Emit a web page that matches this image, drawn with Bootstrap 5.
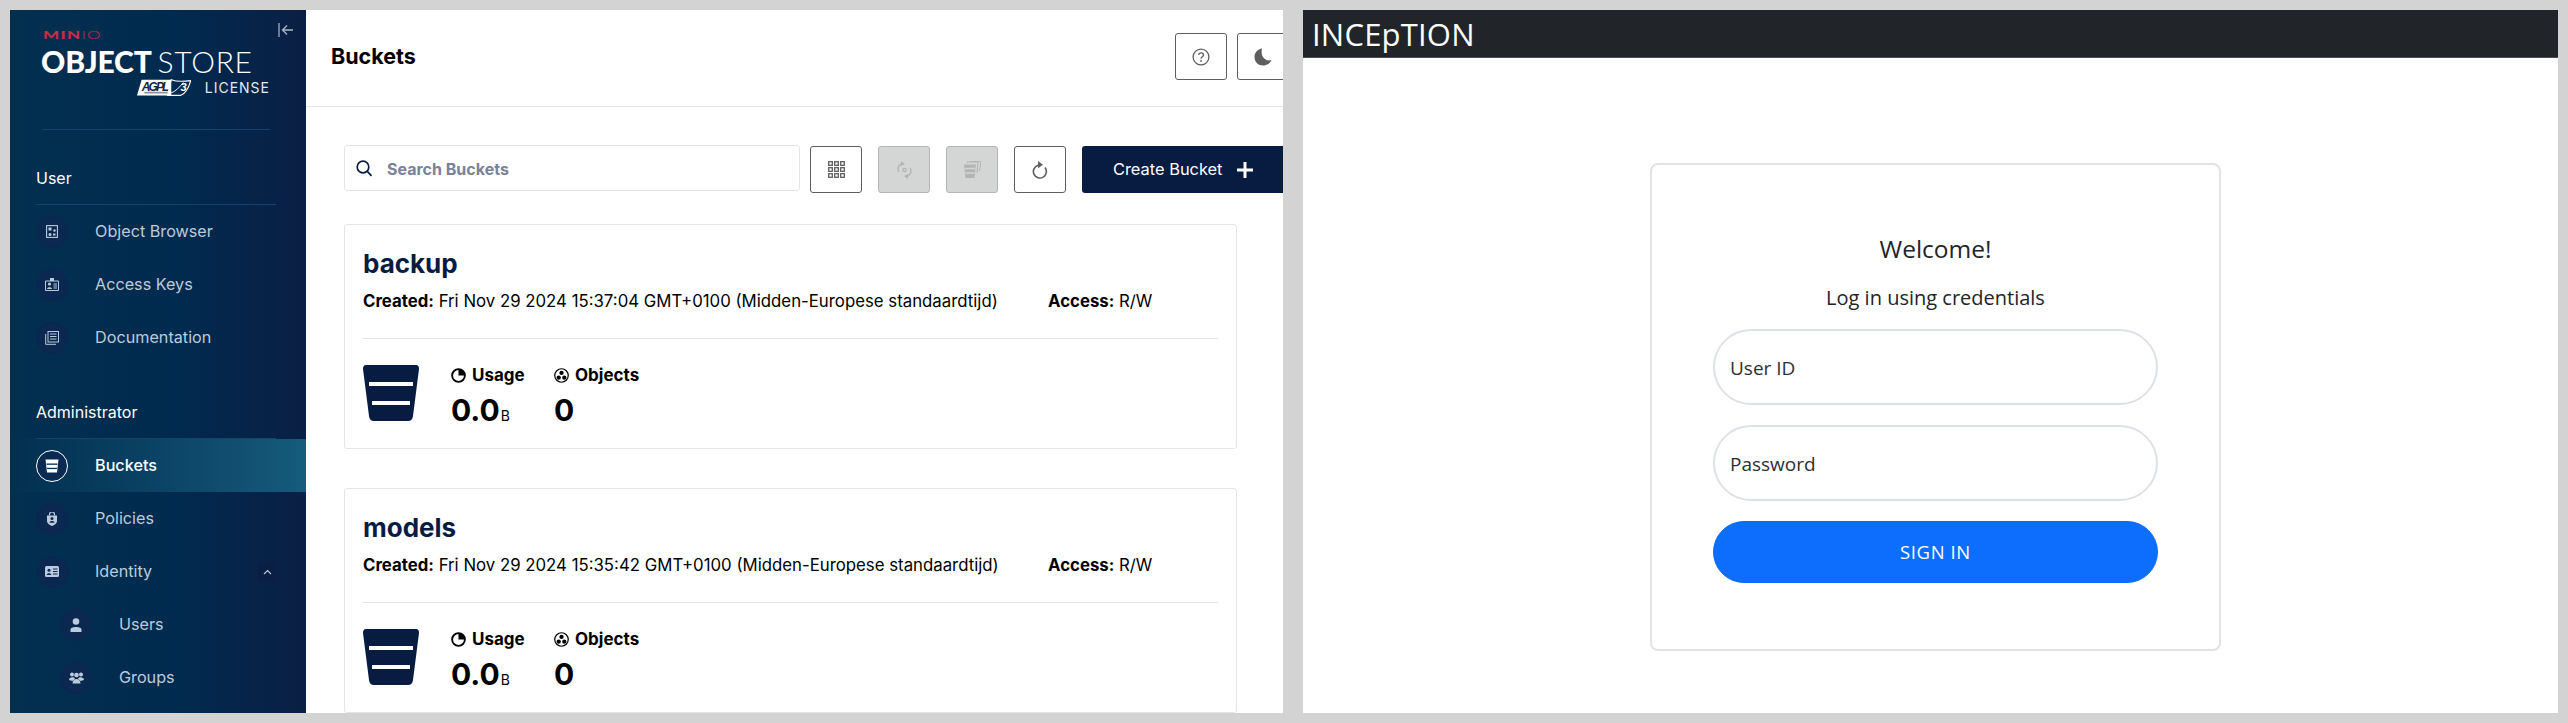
<!DOCTYPE html>
<html lang="en">
<head>
<meta charset="utf-8">
<title>MinIO and INCEpTION</title>
<link href="https://cdn.jsdelivr.net/npm/bootstrap@5.3.0/dist/css/bootstrap.min.css" rel="stylesheet">
<style>
html,body{height:100%;}
body{background:#d3d3d3;overflow:hidden;}
.shell{height:723px;padding:10px;gap:20px;}
.minio-pane{width:1273px;flex:none;background:#fff;overflow:hidden;font-family:Inter,"Liberation Sans",sans-serif;color:#000;}
.side{width:296px;flex:none;background:linear-gradient(90deg,#03304f 0%,#002a4f 55%,#0b1f44 100%);color:#bccbdc;position:relative;}
.collapse-ico{position:absolute;left:268px;top:13px;width:16px;height:14px;}
.brand{margin:22px 36px 0 32px;height:98px;border-bottom:1px solid #15436a;box-sizing:content-box;}
.brand-minio{font-size:12px;line-height:8px;height:8px;color:#c72c48;letter-spacing:.9px;font-weight:900;font-family:Lato,Inter,sans-serif;transform-origin:left;transform:scaleX(1.42);margin-top:-1px;margin-left:1px;}
.brand-minio span{font-weight:300;}
.brand-title{font-size:30px;line-height:22px;margin:11px 0 0 -1px;color:#fff;font-weight:900;letter-spacing:-.2px;white-space:nowrap;font-family:Lato,Inter,sans-serif;}
.brand-title span{font-weight:300;letter-spacing:.7px;}
.brand-sub{margin-top:7px;height:18px;margin-left:95px;}
.brand-lic{color:#e4e9ef;font-size:14px;letter-spacing:1px;line-height:18px;margin-left:14px;}
.side-head{margin:36px 30px 0 26px;padding-bottom:14px;border-bottom:1px solid #15436a;color:#fff;font-size:16px;line-height:24px;}
.side-row{height:53px;padding-left:26px;font-size:16.2px;gap:27px;}
.side-row.sub{padding-left:50px;}
.side-row.on{background:linear-gradient(90deg,rgba(21,92,124,0) 0%,#155c7c 100%);color:#fff;font-weight:500;}
.side-circle{width:32px;height:32px;flex:none;border-radius:50%;background:#0b2851;border:1px solid #0d2650;color:#bccbdc;}
.on .side-circle{background:#0b2a52;border-color:#fff;color:#fff;}
.chev-box{width:18px;height:18px;background:#0b1f44;border-radius:2px;margin-left:auto;margin-right:30px;}
.main-col{width:977px;flex:none;overflow:hidden;}
.top-bar{height:97px;border-bottom:1px solid #e5e5e5;padding:0 0 3px 25px;gap:10px;}
.page-title{width:834px;flex:none;font-size:21.5px;font-weight:700;margin:0;}
.square-btn{width:52px;height:47px;flex:none;padding:0;border:1px solid #5e5e5e;border-radius:3px;background:#fff;color:#5e5e5e;}
.square-btn:hover{background:#fff;color:#5e5e5e;border-color:#5e5e5e;}
.square-btn.off,.square-btn.off:disabled{background:#d4d6d5;border-color:#b5b5b5;color:#b3b5b4;opacity:1;}
.tool-wrap{padding:39px 0 0 38px;}
.tool-row{height:47px;margin-bottom:31px;}
.search-box{width:456px;height:46px;flex:none;margin-top:-1px;border:1px solid #e5e5e5;border-radius:3px;padding:1px 0 0 11px;margin-right:10px;color:#081c42;}
.search-input{border:0;outline:0;padding:0;margin-left:14px;flex:1;min-width:0;font-size:16px;font-weight:700;color:#081c42;background:transparent;}
.search-input::placeholder{color:#7a8299;opacity:1;}
.gap-16{gap:16px;}
.create-btn{width:210px;flex:none;height:47px;margin-left:16px;background:#081c42;border:0;border-radius:3px;color:#fff;font-size:16.4px;padding:0 0 0 31px;gap:15px;justify-content:flex-start;}
.create-btn:hover{background:#081c42;color:#fff;}
.bucket-box{width:893px;height:225px;margin-bottom:39px;border:1px solid #e5e5e5;border-radius:3px;padding:23px 18px 0;flex:none;}
.bucket-name{font-size:26px;line-height:32px;font-weight:700;color:#081c42;margin:0;}
.bucket-meta{margin-top:11px;line-height:20px;font-size:16.8px;padding-bottom:27px;border-bottom:1px solid #e5e5e5;}
.bucket-meta b{font-weight:700;}
.meta-created{width:685px;flex:none;white-space:nowrap;}
.stats{margin-top:26px;}
.stat-col{width:103px;flex:none;}
.stat-label{font-size:17px;font-weight:700;line-height:20px;gap:6px;white-space:nowrap;}
.stat-val{font-size:30px;font-weight:700;line-height:30px;margin-top:10px;}
.stat-val small{font-size:14px;font-weight:400;margin-left:1px;}
.bucket-big{margin-right:32px;flex:none;}
.incept-pane{flex:1;min-width:0;background:#fff;font-family:"Open Sans","Noto Sans",sans-serif;color:#212529;}
.incept-nav{height:48px;padding:0 0 0 9px;border-bottom:1px solid #4a4d50;align-items:center;flex-wrap:nowrap;justify-content:flex-start;}
.incept-nav .navbar-brand{font-size:31px;line-height:40px;padding:0;margin:0;color:#fff;letter-spacing:.2px;}
.login-box{width:571px;height:488px;margin:105px 0 0 347px;border:2px solid #e3e3e3;border-radius:8px;padding:66px 61px 0;}
.login-title{font-size:24.5px;line-height:36px;margin:0;text-align:center;}
.login-sub{font-size:20px;line-height:28px;margin:17px 0 0;text-align:center;}
.login-field{margin-top:17px;}
.login-field+.login-field{margin-top:20px;}
.login-field .form-control{height:76px;min-height:76px;border-radius:38px;border:2px solid #dee2e6;padding:0 16px;}
.login-field label{font-size:19px;line-height:28px;padding:25px 0 0 17px;color:#2b3035;opacity:1;border:0;}
.signin{width:100%;height:62px;margin-top:20px;border-radius:31px;background:#0d6efd;font-size:18.5px;letter-spacing:.6px;text-transform:uppercase;padding-top:5px;}
</style>
</head>
<body>
<svg width="0" height="0" class="d-none">
  <symbol id="i-bucket" viewBox="0 0 56 56"><path d="M3 0H53Q56 0 56 4L50 51Q49.500 56 45 56H11Q6.500 56 6 51L0 4Q0 0 3 0Z" fill="currentColor"/><rect x="6" y="17" width="44" height="4" fill="#fff"/><rect x="9" y="36" width="38" height="4" fill="#fff"/></symbol>
  <symbol id="i-usage" viewBox="0 0 16 16"><circle cx="8" cy="8" r="6.800" fill="none" stroke="currentColor" stroke-width="2"/><path d="M8 8V1.500A6.500 6.500 0 0 1 14.500 8Z" fill="currentColor"/></symbol>
  <symbol id="i-objects" viewBox="0 0 16 16"><circle cx="8" cy="8" r="7.200" fill="none" stroke="currentColor" stroke-width="1.300"/><circle cx="8" cy="5.200" r="2.300" fill="currentColor"/><circle cx="5" cy="10.300" r="2.300" fill="currentColor"/><circle cx="11" cy="10.300" r="2.300" fill="currentColor"/></symbol>
</svg>

<div class="shell d-flex">
  <div class="minio-pane d-flex">
    <aside class="side">
      <svg class="collapse-ico" viewBox="0 0 16 14" aria-hidden="true"><path d="M1 0V14" stroke="#8d9db0" stroke-width="1.500"/><path d="M15 7H5M9 2.500L4.500 7L9 11.500" fill="none" stroke="#aab6c4" stroke-width="1.300"/></svg>
      <div class="brand">
        <div class="brand-minio">MIN<span>IO</span></div>
        <div class="brand-title">OBJECT <span>STORE</span></div>
        <div class="brand-sub d-flex align-items-center">
          <svg width="58" height="18" viewBox="0 0 58 18" aria-hidden="true">
            <path d="M5 0H37V17H0Z" fill="#fff"/>
            <text x="5" y="12" font-family="Liberation Sans" font-style="italic" font-weight="700" font-size="13" fill="#15243f" textLength="30">AGPL</text>
            <rect x="8" y="13" width="26" height="2" fill="#8a93a3"/>
            <path d="M37 0L33 17H47C53 15 56 8 58 1C50 2 42 2 37 0Z" fill="none" stroke="#fff" stroke-width="1.200"/>
            <path d="M35 15C42 13 46 8 50 3" fill="none" stroke="#fff" stroke-width="1"/>
            <text x="47" y="12" font-family="Liberation Sans" font-weight="700" font-style="italic" font-size="12" fill="#fff">3</text>
          </svg>
          <span class="brand-lic">LICENSE</span>
        </div>
      </div>

      <div class="side-head">User</div>
      <div class="side-row d-flex align-items-center"><span class="side-circle d-flex align-items-center justify-content-center"><svg width="12" height="13" viewBox="0 0 12 13"><rect x=".6" y=".6" width="10.800" height="11.800" fill="none" stroke="currentColor" stroke-width="1.100"/><rect x="2.500" y="2.500" width="3" height="3" fill="currentColor"/><circle cx="8.500" cy="5.500" r="1.200" fill="currentColor"/><circle cx="4" cy="9.500" r="1.500" fill="currentColor"/><rect x="7" y="8.500" width="2.500" height="2" fill="currentColor"/></svg></span><span>Object Browser</span></div>
      <div class="side-row d-flex align-items-center"><span class="side-circle d-flex align-items-center justify-content-center"><svg width="14" height="13" viewBox="0 0 14 13"><path d="M1 3H13.500V12.500H.5V3Z" fill="none" stroke="currentColor"/><rect x="5" y="0" width="4" height="3" fill="currentColor"/><circle cx="4.500" cy="6" r="1.600" fill="currentColor"/><path d="M2 11C2 8.500 7 8.500 7 11Z" fill="currentColor"/><path d="M8.500 6H12M8.500 8H12M8.500 10H12" stroke="currentColor"/></svg></span><span>Access Keys</span></div>
      <div class="side-row d-flex align-items-center"><span class="side-circle d-flex align-items-center justify-content-center"><svg width="14" height="14" viewBox="0 0 14 14"><rect x="3" y=".5" width="10.500" height="10.500" fill="none" stroke="currentColor"/><path d="M5 3H11.500M5 5.500H11.500M5 8H11.500" stroke="currentColor"/><path d="M.7 3V13.300H11" fill="none" stroke="currentColor"/></svg></span><span>Documentation</span></div>

      <div class="side-head">Administrator</div>
      <div class="side-row on d-flex align-items-center"><span class="side-circle d-flex align-items-center justify-content-center"><svg width="14" height="14" viewBox="0 0 14 14"><path d="M.5 .5H13.500L12 13.500H2Z" fill="currentColor"/><rect x="1.500" y="4.500" width="11" height="1.300" fill="#0b2a52"/><rect x="2" y="8.800" width="10" height="1.300" fill="#0b2a52"/></svg></span><span>Buckets</span></div>
      <div class="side-row d-flex align-items-center"><span class="side-circle d-flex align-items-center justify-content-center"><svg width="12" height="14" viewBox="0 0 12 14"><path d="M3.500 3.500V2.500A2.500 2.500 0 0 1 8.500 2.500V3.500" fill="none" stroke="currentColor" stroke-width="1.200"/><path d="M1 3.500H11V9C11 11.500 8 13.500 6 14C4 13.500 1 11.500 1 9Z" fill="currentColor"/><circle cx="6" cy="6.500" r="1.500" fill="#0b2851"/><path d="M3.500 10.800C3.500 8.500 8.500 8.500 8.500 10.800Z" fill="#0b2851"/></svg></span><span>Policies</span></div>
      <div class="side-row d-flex align-items-center"><span class="side-circle d-flex align-items-center justify-content-center"><svg width="14" height="11" viewBox="0 0 14 11"><rect width="14" height="11" rx="1.500" fill="currentColor"/><circle cx="4" cy="4.200" r="1.500" fill="#0b2851"/><path d="M1.700 9C1.700 6.500 6.300 6.500 6.300 9Z" fill="#0b2851"/><path d="M8 3H12.500M8 5.500H12.500M8 8H12.500" stroke="#0b2851"/></svg></span><span>Identity</span>
        <span class="chev-box d-flex align-items-center justify-content-center"><svg width="9" height="6" viewBox="0 0 9 6"><path d="M1 5L4.500 1.500L8 5" fill="none" stroke="#bccbdc" stroke-width="1.100"/></svg></span></div>
      <div class="side-row sub d-flex align-items-center"><span class="side-circle d-flex align-items-center justify-content-center"><svg width="12" height="14" viewBox="0 0 12 14"><circle cx="6" cy="3.500" r="3.300" fill="currentColor"/><path d="M.5 14V11.500C.5 8 11.500 8 11.500 11.500V14Z" fill="currentColor"/></svg></span><span>Users</span></div>
      <div class="side-row sub d-flex align-items-center"><span class="side-circle d-flex align-items-center justify-content-center"><svg width="15" height="12" viewBox="0 0 15 12"><circle cx="7.500" cy="3" r="2.300" fill="currentColor"/><circle cx="3" cy="2.500" r="2" fill="currentColor"/><circle cx="12" cy="2.500" r="2" fill="currentColor"/><path d="M0 8C0 4.500 6 4.500 6 7L3.500 9ZM15 8C15 4.500 9 4.500 9 7L11.500 9Z" fill="currentColor"/><path d="M3.500 11.500C3.500 5.500 11.500 5.500 11.500 11.500Z" fill="currentColor"/></svg></span><span>Groups</span></div>
    </aside>

    <main class="main-col">
      <header class="top-bar d-flex align-items-center">
        <h1 class="page-title">Buckets</h1>
        <button class="btn square-btn d-flex align-items-center justify-content-center" type="button" aria-label="Help"><svg width="18" height="18" viewBox="0 0 18 18"><circle cx="9" cy="9" r="7.900" fill="none" stroke="currentColor" stroke-width="1.300"/><path d="M6.600 7C6.600 4.200 11.500 4.300 11.500 7C11.500 8.800 9 8.800 9 10.800" fill="none" stroke="currentColor" stroke-width="1.300"/><circle cx="9" cy="13" r=".9" fill="currentColor"/></svg></button>
        <button class="btn square-btn d-flex align-items-center justify-content-center" type="button" aria-label="Dark mode"><svg width="18" height="18" viewBox="0 0 18 18"><path d="M8 .5C4 1 .5 4.500 .5 9C.5 14 4.500 17.500 9 17.500C13 17.500 16.500 15 17.500 12C12 14 6 9 8 .5Z" fill="currentColor"/></svg></button>
      </header>
      <div class="tool-wrap">
        <div class="tool-row d-flex align-items-start">
          <label class="search-box d-flex align-items-center"><svg width="17" height="17" viewBox="0 0 17 17" aria-hidden="true"><circle cx="7" cy="7" r="5.800" fill="none" stroke="currentColor" stroke-width="1.700"/><path d="M11.300 11.300L15.500 15.800" stroke="currentColor" stroke-width="1.700"/></svg><input class="search-input" type="text" placeholder="Search Buckets" aria-label="Search Buckets"></label>
          <div class="d-flex gap-16">
            <button class="btn square-btn d-flex align-items-center justify-content-center" type="button" aria-label="Select"><svg width="17" height="17" viewBox="0 0 17 17"><g fill="none" stroke="currentColor" stroke-width="1.300"><rect x=".7" y=".7" width="3.600" height="3.600"/><rect x="6.700" y=".7" width="3.600" height="3.600"/><rect x="12.700" y=".7" width="3.600" height="3.600"/><rect x=".7" y="6.700" width="3.600" height="3.600"/><rect x="6.700" y="6.700" width="3.600" height="3.600"/><rect x="12.700" y="6.700" width="3.600" height="3.600"/><rect x=".7" y="12.700" width="3.600" height="3.600"/><rect x="6.700" y="12.700" width="3.600" height="3.600"/><rect x="12.700" y="12.700" width="3.600" height="3.600"/></g></svg></button>
            <button class="btn square-btn off d-flex align-items-center justify-content-center" type="button" disabled aria-label="Replicate"><svg width="15" height="18" viewBox="0 0 15 18"><path d="M2 11C0 8 1 4 5 2.500M13 7C15 10 14 14 10 15.500" fill="none" stroke="currentColor" stroke-width="1.400"/><path d="M4 0L8 3L4 5ZM11 18L7 15L11 13Z" fill="currentColor"/><circle cx="7.500" cy="9" r="1.700" fill="none" stroke="currentColor" stroke-width="1.300"/></svg></button>
            <button class="btn square-btn off d-flex align-items-center justify-content-center" type="button" disabled aria-label="Delete selected"><svg width="17" height="17" viewBox="0 0 17 17"><path d="M0 3.500H12L10.500 17H1.500Z" fill="currentColor"/><path d="M3 2V1H14L13 12M6 .5H17L15.500 10" fill="none" stroke="currentColor"/><path d="M1 7.500H11M1.500 12H10.500" stroke="#d4d6d5" stroke-width="1.300"/></svg></button>
            <button class="btn square-btn d-flex align-items-center justify-content-center" type="button" aria-label="Refresh"><svg width="16" height="18" viewBox="0 0 16 18"><path d="M6 4.300A6.500 6.500 0 1 0 13 6.500" fill="none" stroke="currentColor" stroke-width="1.600"/><path d="M6 0L11 3.800L6 7.300Z" fill="currentColor"/></svg></button>
          </div>
          <button class="btn create-btn d-flex align-items-center" type="button"><span>Create Bucket</span><svg width="16" height="16" viewBox="0 0 16 16"><path d="M8 0V16M0 8H16" stroke="#fff" stroke-width="3"/></svg></button>
        </div>

        <article class="bucket-box">
          <h2 class="bucket-name">backup</h2>
          <div class="bucket-meta d-flex"><div class="meta-created"><b>Created:</b> Fri Nov 29 2024 15:37:04 GMT+0100 (Midden-Europese standaardtijd)</div><div><b>Access:</b> R/W</div></div>
          <div class="stats d-flex">
            <svg class="bucket-big" width="56" height="56" aria-hidden="true" color="#081c42"><use href="#i-bucket"/></svg>
            <div class="stat-col"><div class="stat-label d-flex align-items-center"><svg width="15" height="15"><use href="#i-usage"/></svg>Usage</div><div class="stat-val">0.0<small>B</small></div></div>
            <div class="stat-col"><div class="stat-label d-flex align-items-center"><svg width="15" height="15"><use href="#i-objects"/></svg>Objects</div><div class="stat-val">0</div></div>
          </div>
        </article>

        <article class="bucket-box">
          <h2 class="bucket-name">models</h2>
          <div class="bucket-meta d-flex"><div class="meta-created"><b>Created:</b> Fri Nov 29 2024 15:35:42 GMT+0100 (Midden-Europese standaardtijd)</div><div><b>Access:</b> R/W</div></div>
          <div class="stats d-flex">
            <svg class="bucket-big" width="56" height="56" aria-hidden="true" color="#081c42"><use href="#i-bucket"/></svg>
            <div class="stat-col"><div class="stat-label d-flex align-items-center"><svg width="15" height="15"><use href="#i-usage"/></svg>Usage</div><div class="stat-val">0.0<small>B</small></div></div>
            <div class="stat-col"><div class="stat-label d-flex align-items-center"><svg width="15" height="15"><use href="#i-objects"/></svg>Objects</div><div class="stat-val">0</div></div>
          </div>
        </article>
      </div>
    </main>
  </div>

  <div class="incept-pane">
    <nav class="navbar navbar-dark bg-dark incept-nav"><a class="navbar-brand" href="#">INCEpTION</a></nav>
    <div class="card login-box">
      <h2 class="login-title fw-normal">Welcome!</h2>
      <p class="login-sub">Log in using credentials</p>
      <div class="form-floating login-field"><input class="form-control" id="uid" type="text" placeholder=" "><label for="uid">User ID</label></div>
      <div class="form-floating login-field"><input class="form-control" id="pw" type="password" placeholder=" "><label for="pw">Password</label></div>
      <button class="btn btn-primary signin" type="button">Sign in</button>
    </div>
  </div>
</div>
<script src="https://cdn.jsdelivr.net/npm/bootstrap@5.3.0/dist/js/bootstrap.bundle.min.js"></script>
</body>
</html>
